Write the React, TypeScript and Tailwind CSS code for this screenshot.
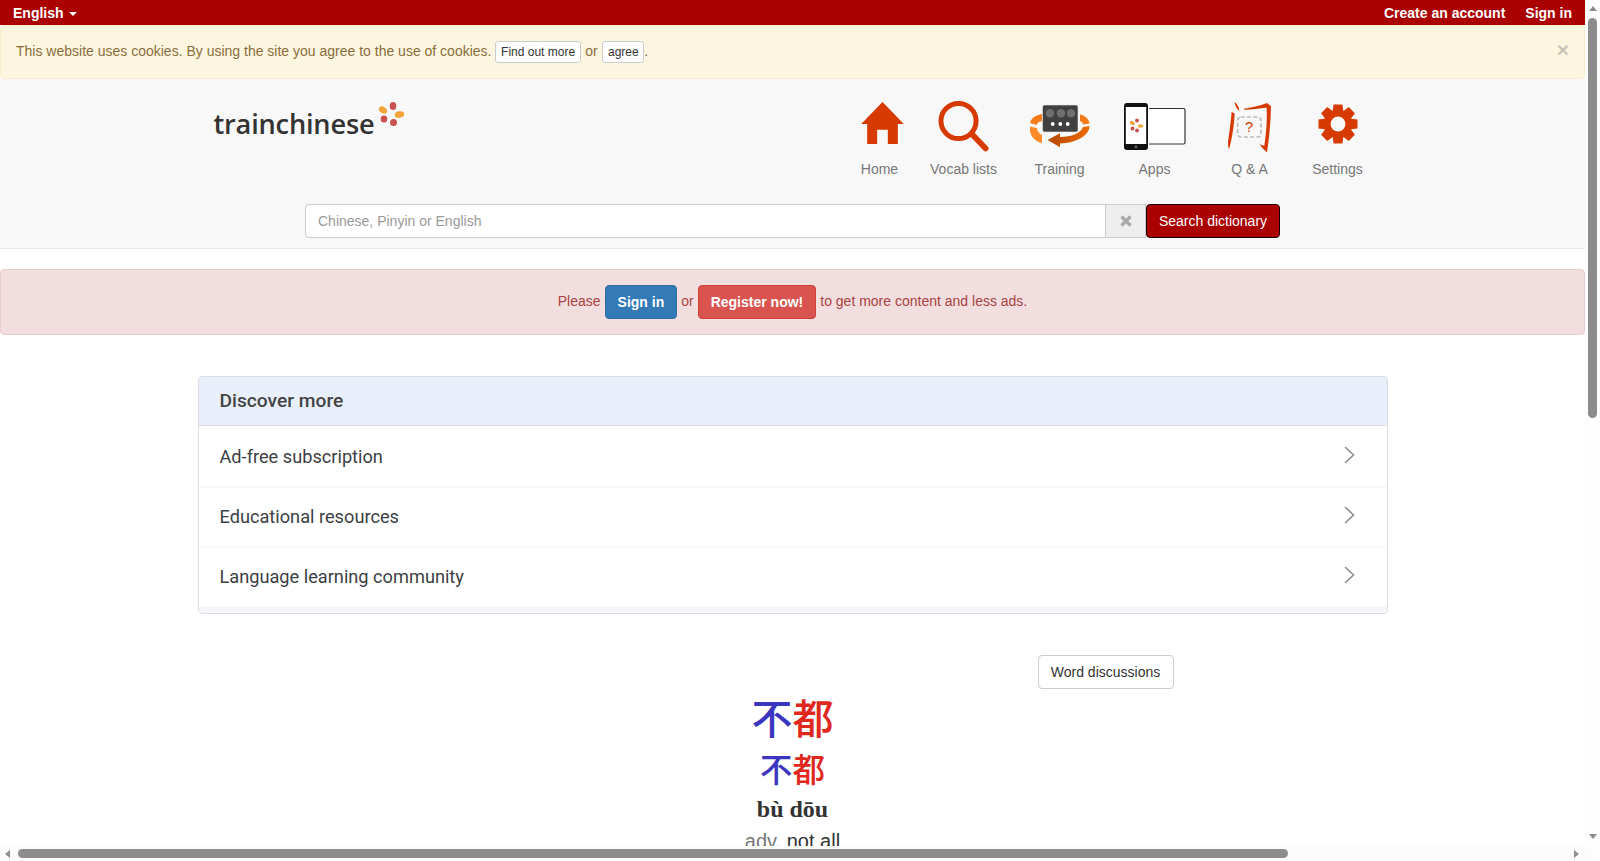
import React from "react";

const ORANGE = "#d63a00";

function HomeIcon() {
  return (
    <svg width="43" height="42" viewBox="92 52 128 126" className="ml-[5px] mt-[1px]">
      <path d="M156 52 L220 118 H202 V178 H172 V135 H140 V178 H110 V118 H92 Z" fill={ORANGE} />
    </svg>
  );
}

function SearchIcon() {
  return (
    <svg width="53" height="54" viewBox="320 42 160 162" className="mt-[-2px]">
      <circle cx="385" cy="108" r="53" fill="none" stroke={ORANGE} strokeWidth="15" />
      <path d="M428 150 L467 191" stroke={ORANGE} strokeWidth="17" strokeLinecap="round" />
    </svg>
  );
}

function TrainingIcon() {
  return (
    <svg width="62" height="46" viewBox="0 0 62 46">
      <defs>
        <linearGradient id="arrowGrad" x1="0" x2="1" y1="0" y2="0">
          <stop offset="0" stopColor="#b34700" />
          <stop offset="1" stopColor="#f06a00" />
        </linearGradient>
      </defs>
      <path d="M1 19 C2 14 7 11 13 10 L13 17 C9 18 8 19 8 21 Z" fill="#f47a1a" />
      <path d="M1 22.5 L8 24 C8 27 10 29.5 13 31 L13 39 C7 38 2 33 1 27 Z" fill="#ff8a2a" />
      <path d="M51 10.5 C56 11.5 60 15 60.5 19.5 L54 20.5 C54 19 53 18 51 17 Z" fill="#f47a1a" />
      <rect x="13.5" y="1" width="35.5" height="27" rx="2" fill="#404040" stroke="#e8e8e8" strokeWidth="0.6" />
      <circle cx="21" cy="9.3" r="4.2" fill="#6f6f6f" />
      <circle cx="32" cy="9.3" r="4.2" fill="#6f6f6f" />
      <circle cx="42" cy="9.3" r="4.2" fill="#6f6f6f" />
      <circle cx="23.7" cy="20" r="1.9" fill="#fff" />
      <circle cx="31.3" cy="20" r="1.9" fill="#fff" />
      <circle cx="38.7" cy="20" r="1.9" fill="#fff" />
      <path d="M18.7 36 L31 29.3 L31 33 C43 33 52 29 54 23 L60.5 22 C60.5 31 48 39 31 39.5 L31 43.3 Z" fill="url(#arrowGrad)" />
    </svg>
  );
}

function AppsIcon() {
  return (
    <svg width="62" height="48" viewBox="0 0 62 48">
      <path d="M25 5.5 H59.5 Q61 5.5 61 7 V39.5 Q61 41 59.5 41 H25 Z" fill="#fff" />
      <path d="M25 5.5 H59.5 Q61 5.5 61 7 V39.5 Q61 41 59.5 41 H25" fill="none" stroke="#333" strokeWidth="1.2" />
      <rect x="0" y="0" width="24" height="47" rx="3" fill="#111" />
      <rect x="1.8" y="4" width="20.4" height="37" fill="#fff" />
      <circle cx="12" cy="44" r="1.4" fill="#666" />
      <ellipse cx="8.3" cy="20" rx="2.6" ry="1.8" fill="#f2a33a" transform="rotate(30 8.3 20)" />
      <circle cx="13" cy="17.5" r="1.9" fill="#c9524f" />
      <ellipse cx="16.5" cy="23" rx="2.8" ry="1.7" fill="#f2a33a" />
      <circle cx="8.5" cy="25.5" r="1.9" fill="#c9524f" />
      <circle cx="13" cy="27.5" r="1.9" fill="#c9524f" />
    </svg>
  );
}

function QAIcon() {
  return (
    <svg width="45" height="52" viewBox="172 46 135 156">
      <path d="M194 48 C202 54 209 64 209 76 C202 70 196 60 194 48 Z" fill={ORANGE} />
      <path d="M186 78 L195 84 C193 120 187 160 178 191 C175 182 174 170 176 160 C181 130 184 100 186 78 Z" fill={ORANGE} />
      <path d="M222 69 C245 67 270 60 292 52 L304 62 C303 100 300 150 292 200 C284 194 276 186 270 176 C276 178 281 180 284 180 C290 140 293 100 291 66 C270 68 245 71 224 72 Z" fill={ORANGE} />
      <rect x="204" y="94" width="70" height="60" rx="9" fill="none" stroke="#bbbbbb" strokeWidth="5" strokeDasharray="12 7" />
      <text x="238" y="140" textAnchor="middle" fontSize="44" fill={ORANGE} fontFamily="'Liberation Sans', sans-serif">?</text>
    </svg>
  );
}

function GearIcon() {
  const teeth = [0, 45, 90, 135, 180, 225, 270, 315];
  return (
    <svg width="40" height="40" viewBox="-20 -20 40 40" className="mt-[3px]">
      {teeth.map((a) => (
        <path key={a} d="M-4.4 -19.5 H4.4 L5.6 -11 H-5.6 Z" fill={ORANGE} transform={`rotate(${a})`} />
      ))}
      <circle r="14.2" fill={ORANGE} />
      <circle r="7.4" fill="#f8f8f8" />
    </svg>
  );
}

function LogoDots() {
  return (
    <svg width="30" height="28" viewBox="0 0 30 28" className="ml-[3px]">
      <ellipse cx="6" cy="9" rx="4.4" ry="3.2" fill="#f2a33a" transform="rotate(35 6 9)" />
      <ellipse cx="16" cy="5" rx="3.3" ry="3.9" fill="#c9524f" />
      <ellipse cx="22.5" cy="13.5" rx="4.8" ry="3.2" fill="#f2a33a" transform="rotate(-8 22.5 13.5)" />
      <ellipse cx="7" cy="18" rx="3.3" ry="3.6" fill="#c9524f" />
      <ellipse cx="16.5" cy="21.5" rx="3.5" ry="3.6" fill="#c9524f" />
    </svg>
  );
}

function NavItem({ label, w, children }: { label: string; w: string; children: React.ReactNode }) {
  return (
    <div className={`flex flex-col items-center ${w}`}>
      <div className="h-[58px] flex items-start justify-center">{children}</div>
      <span className="text-[14px] leading-[20px] text-[#777]">{label}</span>
    </div>
  );
}

function Chevron({ cls }: { cls: string }) {
  return (
    <svg width="11" height="18" viewBox="0 0 11 18" className={`mr-[32px] ${cls}`}>
      <path d="M1 1 L9.5 9 L1 17" fill="none" stroke="#8e9296" strokeWidth="1.7" />
    </svg>
  );
}

function Row({ text, cls, chev }: { text: string; cls: string; chev: string }) {
  return (
    <div className={`flex items-center justify-between ${cls} pl-[21px] border-[#f8f8f8] text-[18.2px] text-[#3c4043]`}>
      <span className="font-['Roboto',sans-serif]">{text}</span>
      <Chevron cls={chev} />
    </div>
  );
}

export default function App() {
  return (
    <div className="grid grid-cols-[1fr_15px] grid-rows-[1fr_15px] h-screen w-screen overflow-hidden bg-white font-['Liberation_Sans',Arial,sans-serif] text-[14px] leading-[20px] text-[#333]">
      <main className="overflow-hidden min-w-0">
        <div className="h-[25px] bg-[#aa0000] flex items-center justify-between px-[13px] text-white font-bold text-[14px]">
          <div className="flex items-center">
            English
            <span className="ml-[5px] mt-[2px] w-0 h-0 border-x-[4px] border-x-transparent border-t-[4px] border-t-white" />
          </div>
          <div className="flex gap-[20px]">
            <span>Create an account</span>
            <span>Sign in</span>
          </div>
        </div>

        <div className="h-[54px] bg-[#fcf6e1] border border-[#faebcc] rounded-[4px] flex items-center pl-[15px] pr-[15px] text-[#8a6d3b]">
          <span className="mb-[2px]">This website uses cookies. By using the site you agree to the use of cookies.</span>
          <button className="ml-[4px] h-[22px] px-[4.6px] border border-[#ccc] bg-white rounded-[3px] text-[12px] text-[#333]">Find out more</button>
          <span className="mx-[4.6px] mb-[2px]">or</span>
          <button className="h-[22px] px-[4.6px] border border-[#ccc] bg-white rounded-[3px] text-[12px] text-[#333]">agree</button>
          <span className="mb-[2px]">.</span>
          <span className="ml-auto mt-[-5px] text-[21px] font-bold leading-none text-black opacity-20">×</span>
        </div>

        <header className="h-[170px] bg-[#f8f8f8] border-b border-[#e7e7e7] pt-[22px]">
          <div className="w-[1190px] mx-auto flex pl-[16px] pr-[17px]">
            <div className="flex items-start h-[58px]">
              <span className="font-['Open_Sans',sans-serif] font-semibold text-[27.2px] leading-[34px] text-[#333] mt-[6px] tracking-[-0.2px]">trainchinese</span>
              <LogoDots />
            </div>
            <nav className="flex ml-auto">
              <NavItem label="Home" w="w-[86px]"><HomeIcon /></NavItem>
              <NavItem label="Vocab lists" w="w-[82px]"><SearchIcon /></NavItem>
              <NavItem label="Training" w="w-[110px]"><div className="mt-[3px]"><TrainingIcon /></div></NavItem>
              <NavItem label="Apps" w="w-[80px]"><div className="mt-[2px]"><AppsIcon /></div></NavItem>
              <NavItem label="Q & A" w="w-[110px]"><QAIcon /></NavItem>
              <NavItem label="Settings" w="w-[66px]"><GearIcon /></NavItem>
            </nav>
          </div>
          <div className="w-[975px] ml-[305px] mt-[25px] flex h-[34px]">
            <div className="flex-1 bg-white border border-[#ccc] rounded-l-[4px] px-[12px] flex items-center text-[#999]">Chinese, Pinyin or English</div>
            <div className="w-[41px] ml-[-1px] bg-[#eee] border border-[#ccc] flex items-center justify-center">
              <svg width="12" height="12" viewBox="0 0 12 12">
                <path d="M1.5 1.5 L10.5 10.5 M10.5 1.5 L1.5 10.5" stroke="#aaa" strokeWidth="3.4" />
              </svg>
            </div>
            <button className="w-[134px] bg-[#aa0000] border border-[#1a0000] rounded-[4px] text-white text-[14px]">Search dictionary</button>
          </div>
        </header>

        <div className="mt-[20px] h-[66px] bg-[#f2dede] border border-[#ebccd1] rounded-[4px] flex items-center justify-center text-[#a94442]">
          <span className="mb-[2px]">Please</span>
          <button className="ml-[4px] h-[34px] px-[12px] bg-[#337ab7] border border-[#2e6da4] rounded-[4px] text-white font-bold text-[14px]">Sign in</button>
          <span className="mx-[4px] mb-[2px]">or</span>
          <button className="h-[34px] px-[12px] bg-[#d9534f] border border-[#d43f3a] rounded-[4px] text-white font-bold text-[14px]">Register now!</button>
          <span className="ml-[4px] mb-[2px]">to get more content and less ads.</span>
        </div>

        <section className="w-[1190px] mx-auto mt-[41px] h-[238px] border border-[#dadce0] rounded-[4px] overflow-hidden flex flex-col">
          <div className="h-[49px] shrink-0 bg-[#e8effb] border-b border-[#dadce0] flex items-center pl-[21px] pb-[1px] font-['Roboto',sans-serif] font-medium text-[19.2px] text-[#444]">Discover more</div>
          <Row text="Ad-free subscription" cls="h-[62px] shrink-0 border-b-2 pt-[1px]" chev="mt-[-3px]" />
          <Row text="Educational resources" cls="h-[60px] shrink-0 border-b-2" chev="mt-[-4px]" />
          <Row text="Language learning community" cls="h-[58px] shrink-0" chev="mt-[-4px]" />
          <div className="flex-1 bg-[#f6f7fb]" />
        </section>

        <div className="w-[1190px] mx-auto mt-[41px] flex justify-end pr-[214px]">
          <button className="w-[136px] h-[34px] bg-white border border-[#ccc] rounded-[4px] text-[14px] text-[#333]">Word discussions</button>
        </div>

        <div className="flex flex-col items-center font-['Noto_Sans_CJK_SC',sans-serif]">
          <div className="text-[41px] leading-[48px] mt-[3px] font-medium">
            <span className="text-[#3c35c0]">不</span><span className="text-[#e0281e]">都</span>
          </div>
          <div className="text-[32.5px] leading-[40px] mt-[8px] font-medium">
            <span className="text-[#3c35c0]">不</span><span className="text-[#e0281e]">都</span>
          </div>
          <div className="font-['Liberation_Serif',serif] font-bold text-[24px] leading-[28px] mt-[7px] text-[#333]">bù dōu</div>
          <div className="font-['Liberation_Sans',sans-serif] text-[20px] leading-[28px] mt-[4px]">
            <span className="text-[#777]">adv.</span> <span className="text-[#333]">not all</span>
          </div>
        </div>
      </main>

      <aside className="bg-[#fdfdfd] flex flex-col items-center">
        <span className="mt-[6px] w-0 h-0 border-x-[4.5px] border-x-transparent border-b-[5px] border-b-[#8c8c8c]" />
        <div className="mt-[7px] w-[9px] h-[400px] rounded-[5px] bg-[#8c8c8c]" />
        <span className="mt-auto mb-[7px] w-0 h-0 border-x-[4.5px] border-x-transparent border-t-[5px] border-t-[#8c8c8c]" />
      </aside>
      <div className="bg-[#fcfcfc] flex items-center pl-[5px]">
        <span className="w-0 h-0 border-y-[4.5px] border-y-transparent border-r-[5px] border-r-[#8c8c8c]" />
        <div className="ml-[8px] w-[1270px] h-[9px] rounded-[5px] bg-[#8c8c8c]" />
        <span className="ml-[286px] w-0 h-0 border-y-[4.5px] border-y-transparent border-l-[5px] border-l-[#8c8c8c]" />
      </div>
      <div className="bg-[#fdfdfd]" />
    </div>
  );
}
